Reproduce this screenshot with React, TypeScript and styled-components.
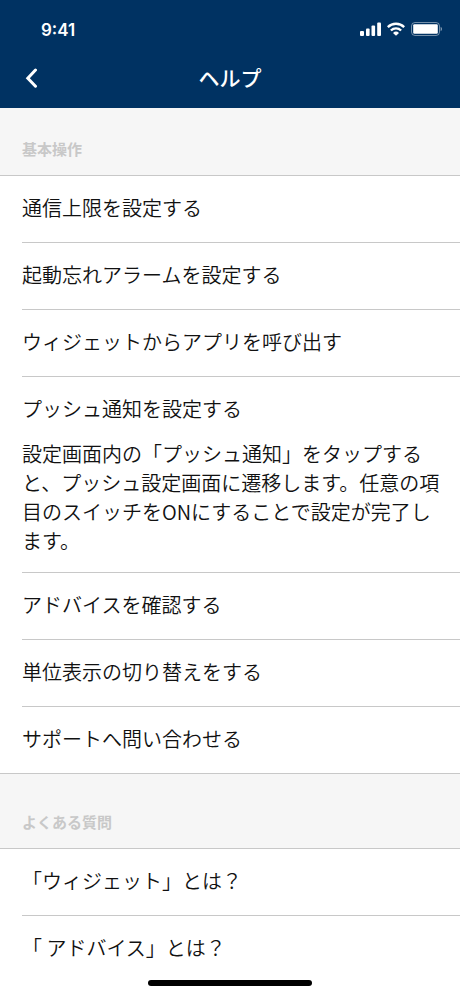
import React, { useState } from "react";
import styled, { createGlobalStyle } from "styled-components";

const GlobalStyle = createGlobalStyle`
  *, *::before, *::after { box-sizing: border-box; }
  body {
    margin: 0;
    background: #fff;
    color: #111;
    font-family: "Noto Sans CJK JP", "Noto Sans", sans-serif;
  }
`;

const Screen = styled.div`
  display: flex;
  flex-direction: column;
  min-height: 100vh;
`;

const Header = styled.header`
  background: #003262;
  color: #fff;
`;

const StatusBar = styled.div`
  display: flex;
  align-items: center;
  justify-content: space-between;
  height: 48px;
  padding: 12px 18px 0 41px;
`;

const Time = styled.span`
  font-family: Inter, sans-serif;
  font-size: 17px;
  font-weight: 600;
  line-height: 24px;
`;

const StatusIcons = styled.div`
  display: flex;
  align-items: center;
  gap: 6px;
  padding-bottom: 2px;

  svg {
    display: block;
  }
`;

const NavBar = styled.div`
  display: grid;
  grid-template-columns: 64px 1fr 64px;
  align-items: center;
  height: 60px;
`;

const BackButton = styled.button`
  display: flex;
  align-items: center;
  height: 44px;
  padding: 0 24px;
  border: 0;
  background: none;
  color: inherit;
  cursor: pointer;

  svg {
    display: block;
    flex: none;
  }
`;

const Title = styled.h1`
  margin: 0;
  padding-bottom: 2px;
  font-size: 21px;
  font-weight: 500;
  line-height: 32px;
  text-align: center;
`;

const SectionTitle = styled.h2<{ $first?: boolean }>`
  margin: 0;
  padding: ${(p) => (p.$first ? 29 : 36)}px 22px 14px;
  border-bottom: 1px solid #c8c8c8;
  background: #f6f6f6;
  color: #c8c8c8;
  font-size: 15px;
  font-weight: 700;
  line-height: 24px;
`;

const TopicList = styled.ul`
  margin: 0;
  padding: 0;
  list-style: none;
`;

const Section = styled.section`
  & + & {
    border-top: 1px solid #c8c8c8;
  }
`;

const Topic = styled.li`
  margin-left: 22px;

  & + & {
    border-top: 1px solid #c8c8c8;
  }
`;

const TopicButton = styled.button`
  display: block;
  width: 100%;
  padding: 17px 16px 19px 0;
  border: 0;
  background: none;
  color: inherit;
  font-family: inherit;
  font-size: 20px;
  font-weight: 350;
  line-height: 30px;
  text-align: left;
  cursor: pointer;
`;

const Answer = styled.p`
  margin: -4px 0 0;
  padding: 0 14px 17px 0;
  font-size: 20px;
  font-weight: 350;
  line-height: 29px;
`;

const HomeIndicator = styled.div`
  position: fixed;
  bottom: 10px;
  left: 50%;
  width: 164px;
  height: 6px;
  margin-left: -82px;
  border-radius: 3px;
  background: #000;
`;

interface Item {
  title: string;
  answer?: string;
}

const basics: Item[] = [
  { title: "通信上限を設定する" },
  { title: "起動忘れアラームを設定する" },
  { title: "ウィジェットからアプリを呼び出す" },
  {
    title: "プッシュ通知を設定する",
    answer:
      "設定画面内の「プッシュ通知」をタップすると、プッシュ設定画面に遷移します。任意の項目のスイッチをONにすることで設定が完了します。",
  },
  { title: "アドバイスを確認する" },
  { title: "単位表示の切り替えをする" },
  { title: "サポートへ問い合わせる" },
];

const faq: Item[] = [
  { title: "「ウィジェット」とは？" },
  { title: "「 アドバイス」とは？" },
];

function SignalIcon() {
  return (
    <svg width="21" height="14" viewBox="0 0 21 14" fill="currentColor" aria-hidden="true">
      <rect x="0" y="9" width="4" height="5" rx="1" />
      <rect x="6" y="6.5" width="3.6" height="7.5" rx="1" />
      <rect x="11.5" y="3.5" width="3.6" height="10.5" rx="1" />
      <rect x="17.2" y="0.5" width="3.8" height="13.5" rx="1" />
    </svg>
  );
}

function WifiIcon() {
  return (
    <svg width="18" height="14" viewBox="0 0 18 14" aria-hidden="true">
      <g fill="none" stroke="currentColor" strokeWidth="2.4">
        <path d="M0.8 5.1a11.7 11.7 0 0 1 16.4 0" />
        <path d="M3.9 8.5a7.3 7.3 0 0 1 10.2 0" />
      </g>
      <path d="M9 13.8 6 10.9a4.3 4.3 0 0 1 6 0z" fill="currentColor" />
    </svg>
  );
}

function BatteryIcon() {
  return (
    <svg width="31" height="14" viewBox="0 0 31 14" aria-hidden="true">
      <rect x="0.5" y="0.5" width="28" height="13" rx="3.5" fill="none" stroke="currentColor" strokeOpacity="0.45" />
      <rect x="2.2" y="2.2" width="24.6" height="9.6" rx="1.2" fill="currentColor" />
      <path d="M29.6 4.8c1 .4 1.4 1.3 1.4 2.2s-.4 1.8-1.4 2.2z" fill="currentColor" fillOpacity="0.5" />
    </svg>
  );
}

function BackIcon() {
  return (
    <svg width="15" height="20" viewBox="0 0 15 20" fill="none" stroke="currentColor" strokeWidth="3" strokeLinecap="round" strokeLinejoin="miter" aria-hidden="true">
      <path d="M11.5 2 3.8 10.2l7.700 8" />
    </svg>
  );
}

function HelpSection({ title, items, first }: { title: string; items: Item[]; first?: boolean }) {
  const [open, setOpen] = useState<number>(items.findIndex((item) => item.answer));
  return (
    <Section>
      <SectionTitle $first={first}>{title}</SectionTitle>
      <TopicList>
        {items.map((item, i) => (
          <Topic key={item.title}>
            <TopicButton type="button" aria-expanded={open === i} onClick={() => setOpen(open === i ? -1 : i)}>
              {item.title}
            </TopicButton>
            {open === i && item.answer && <Answer>{item.answer}</Answer>}
          </Topic>
        ))}
      </TopicList>
    </Section>
  );
}

export default function App() {
  return (
    <Screen>
      <GlobalStyle />
      <Header>
        <StatusBar>
          <Time>9:41</Time>
          <StatusIcons>
            <SignalIcon />
            <WifiIcon />
            <BatteryIcon />
          </StatusIcons>
        </StatusBar>
        <NavBar>
          <BackButton type="button" aria-label="戻る">
            <BackIcon />
          </BackButton>
          <Title>ヘルプ</Title>
        </NavBar>
      </Header>
      <main>
        <HelpSection title="基本操作" items={basics} first />
        <HelpSection title="よくある質問" items={faq} />
      </main>
      <HomeIndicator />
    </Screen>
  );
}
